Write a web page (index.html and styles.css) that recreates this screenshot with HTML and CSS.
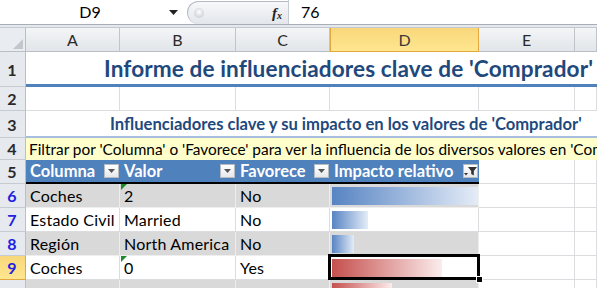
FILE: index.html
```html
<!DOCTYPE html>
<html lang="es">
<head>
<meta charset="utf-8">
<link rel="stylesheet" href="styles.css">
</head>
<body>
<div class="app">
  <div class="fbar">
    <div class="namebox">D9</div>
    <div class="nbdrop"><svg width="9" height="5" viewBox="0 0 9 5"><path d="M0 0h9L4.5 5z" fill="#222"/></svg></div>
    <div class="pill">
      <span class="knob"></span>
      <span class="fx">f<sub>x</sub></span>
    </div>
    <div class="fsep"></div>
    <div class="fval">76</div>
  </div>
  <div class="fgap"></div>
  <div class="sheet">
    <div class="row r-hdr">
      <div class="corner"><svg width="10" height="10" viewBox="0 0 10 10"><path d="M10 0V10H0z" fill="#c3c7cc"/></svg></div>
      <div class="ch">A</div>
      <div class="ch">B</div>
      <div class="ch">C</div>
      <div class="ch sel">D</div>
      <div class="ch">E</div>
      <div class="ch last"></div>
    </div>
    <div class="row r1">
      <div class="rh">1</div>
      <div class="title">Informe de influenciadores clave de 'Comprador'</div>
    </div>
    <div class="row r2">
      <div class="rh">2</div>
      <div class="c"></div><div class="c"></div><div class="c"></div><div class="c"></div><div class="c"></div><div class="c"></div>
    </div>
    <div class="row r3">
      <div class="rh">3</div>
      <div class="subtitle">Influenciadores clave y su impacto en los valores de 'Comprador'</div>
    </div>
    <div class="row r4">
      <div class="rh">4</div>
      <div class="note">Filtrar por 'Columna' o 'Favorece' para ver la influencia de los diversos valores en 'Comprador'</div>
    </div>
    <div class="row r5">
      <div class="rh">5</div>
      <div class="th">Columna<span class="dd"><svg width="7" height="4" viewBox="0 0 7 4"><path d="M0 0h7L3.5 4z" fill="#555"/></svg></span></div>
      <div class="th">Valor<span class="dd"><svg width="7" height="4" viewBox="0 0 7 4"><path d="M0 0h7L3.5 4z" fill="#555"/></svg></span></div>
      <div class="th">Favorece<span class="dd"><svg width="7" height="4" viewBox="0 0 7 4"><path d="M0 0h7L3.5 4z" fill="#555"/></svg></span></div>
      <div class="th">Impacto relativo<span class="dd"><svg width="13" height="10" viewBox="0 0 13 10"><path d="M4 1h9L9.8 5v4.5L7.2 8V5z" fill="#333"/><path d="M0 7h4L2 9.5z" fill="#333"/></svg></span></div>
      <div class="c"></div><div class="c"></div>
    </div>
    <div class="row dr alt">
      <div class="rh blue">6</div>
      <div class="c">Coches</div>
      <div class="c"><span class="tri"></span>2</div>
      <div class="c">No</div>
      <div class="c bar"><span class="b blueb" style="width:146px"></span></div>
      <div class="c white"></div><div class="c white"></div>
    </div>
    <div class="row dr">
      <div class="rh blue">7</div>
      <div class="c">Estado Civil</div>
      <div class="c">Married</div>
      <div class="c">No</div>
      <div class="c bar"><span class="b blueb" style="width:36px"></span></div>
      <div class="c"></div><div class="c"></div>
    </div>
    <div class="row dr alt">
      <div class="rh blue">8</div>
      <div class="c">Región</div>
      <div class="c">North America</div>
      <div class="c">No</div>
      <div class="c bar"><span class="b blueb" style="width:22px"></span></div>
      <div class="c white"></div><div class="c white"></div>
    </div>
    <div class="row dr">
      <div class="rh blue hl">9</div>
      <div class="c">Coches</div>
      <div class="c"><span class="tri"></span>0</div>
      <div class="c">Yes</div>
      <div class="c bar active"><span class="b redb" style="width:110px"></span><span class="selbox"></span><span class="handle"></span></div>
      <div class="c"></div><div class="c"></div>
    </div>
    <div class="row dr alt">
      <div class="rh blue"></div>
      <div class="c"></div>
      <div class="c"></div>
      <div class="c"></div>
      <div class="c bar"><span class="b redb" style="width:60px"></span></div>
      <div class="c white"></div><div class="c white"></div>
    </div>
  </div>
</div>
</body>
</html>
```

FILE: styles.css
```css
* { box-sizing: border-box; }
html, body { margin: 0; padding: 0; }
body {
  width: 597px;
  height: 288px;
  overflow: hidden;
  background: #fff;
  font-family: Lato, "Open Sans", sans-serif;
  color: #000;
}
.app { width: 597px; height: 288px; overflow: hidden; }

/* formula bar */
.fbar {
  height: 25px;
  display: flex;
  align-items: stretch;
  background: #fff;
  border-bottom: 1px solid #a7aeb8;
}
.namebox {
  width: 165px;
  display: flex;
  align-items: center;
  justify-content: center;
  padding-left: 15px;
  font-size: 16px;
  padding-bottom: 1px;
}
.nbdrop {
  width: 22px;
  display: flex;
  align-items: center;
  justify-content: center;
  padding-right: 6px;
}
.pill {
  width: 101px;
  margin-top: 1px;
  border: 1px solid #b3bac4;
  border-right: none;
  border-bottom: none;
  background: linear-gradient(#f7f8fa, #e3e6ea);
  display: flex;
  align-items: center;
  justify-content: space-between;
  padding: 0 6px 0 6px;
  border-top-left-radius: 12px;
  border-bottom-left-radius: 12px;
}
.knob {
  width: 10px; height: 10px;
  border-radius: 50%;
  background: radial-gradient(circle at 50% 40%, #fff 0, #d6d9de 60%, #c4c8ce 100%);
}
.fx {
  font-family: "Liberation Serif", serif;
  font-style: italic;
  font-weight: bold;
  font-size: 15px;
  color: #222;
}
.fx sub { font-size: 10px; vertical-align: -1px; }
.fsep {
  width: 10px;
  border-left: 1px solid #c6ccd3;
}
.fval {
  display: flex;
  align-items: center;
  font-size: 16px;
  padding-left: 3px;
  padding-bottom: 1px;
}
.fgap {
  height: 3px;
  background: #e5e8ec;
  border-bottom: 1px solid #c3c8cf;
}

/* sheet */
.row {
  display: grid;
  grid-template-columns: 26px 94px 116px 94px 149px 96px 22px;
}
.r-hdr { height: 24px; }
.corner {
  background: #e9ecf0;
  border-right: 1px solid #b9bfc7;
  border-bottom: 1px solid #b9bfc7;
  display: flex; align-items: flex-end; justify-content: flex-end;
  padding: 0 2px 2px 0;
}
.ch {
  background: linear-gradient(#f3f5f7, #e2e5e9);
  border-right: 1px solid #c0c5cc;
  border-bottom: 1px solid #b9bfc7;
  display: flex; align-items: center; justify-content: center;
  font-size: 16px;
  color: #2a2a2a;
}
.ch.sel {
  background: linear-gradient(#f8d77b, #ffe68f);
  border: 1px solid #e3a93f;
  border-top: none;
  color: #3a3a3a;
}
.rh {
  background: #e6e9ed;
  border-right: 1px solid #b9bfc7;
  border-bottom: 1px solid #c6cbd2;
  display: flex; align-items: center; justify-content: center;
  font-size: 16px;
  color: #2a2a2a;
  font-weight: bold;
  padding-right: 1px;
}
.rh.blue { color: #2121e0; }
.rh.hl { background: linear-gradient(#f8d77b, #ffe68f); border-right-color: #e3a93f; border-bottom-color: #e3a93f; }

.c {
  border-right: 1px solid #dadcdf;
  border-bottom: 1px solid #dadcdf;
  display: flex; align-items: center;
  padding-left: 4px;
  font-size: 16px;
  letter-spacing: 0.2px;
  white-space: nowrap;
  overflow: hidden;
  position: relative;
}

.r1 { height: 35px; }
.title {
  grid-column: 2 / -1;
  border-bottom: 3px solid #4f81bd;
  color: #1f497d;
  font-weight: bold;
  font-size: 22.6px;
  white-space: nowrap;
  overflow: hidden;
  padding-left: 78px;
  display: flex; align-items: center;
  letter-spacing: 0.1px;
}
.r2 { height: 24px; }
.r3 { height: 27px; }
.subtitle {
  grid-column: 2 / -1;
  border-bottom: 2px solid #a7bfde;
  color: #1f497d;
  font-weight: bold;
  font-size: 16.6px;
  white-space: nowrap;
  overflow: hidden;
  padding-left: 84px;
  display: flex; align-items: center;
  padding-top: 1px;
}
.r4 { height: 22px; }
.note {
  grid-column: 2 / -1;
  background: #ffffcc;
  font-size: 15.4px;
  white-space: nowrap;
  overflow: hidden;
  padding-left: 3px;
  display: flex; align-items: center;
}
.r5 { height: 24px; }
.th {
  background: #4f81bd;
  color: #fff;
  font-weight: bold;
  font-size: 16.5px;
  border-bottom: 2px solid #000;
  display: flex; align-items: center;
  padding-left: 4px;
  position: relative;
  white-space: nowrap;
}
.dd {
  position: absolute;
  right: 1px;
  top: 4px;
  width: 15px;
  height: 14px;
  background: linear-gradient(#ffffff, #e6e8eb);
  border: 1px solid #b6bcc4;
  display: flex; align-items: center; justify-content: center;
}
.th:last-of-type .dd { width: 19px; height: 16px; top: 3px; }

.dr { height: 24px; }
.dr .c { background: #fff; }
.dr.alt .c { background: #d9d9d9; border-color: #eeeeee; }
.dr.alt .c.white { background: #fff; border-color: #dadcdf; }
.dr .c.bar { padding-left: 2px; }
.b {
  display: block;
  height: 18px;
}
.blueb { background: linear-gradient(to right, #5784c3, #e4ecf7); }
.redb { background: linear-gradient(to right, #c5504e, #fbecec); }
.tri {
  position: absolute;
  left: 1px; top: 0;
  width: 0; height: 0;
  border-top: 6px solid #1e8a2e;
  border-right: 6px solid transparent;
}
.selbox {
  position: absolute;
  left: -2px; top: -2px; right: -2px; bottom: -1px;
  border: 3px solid #000;
}
.c.active { overflow: visible; z-index: 2; }
.handle {
  position: absolute;
  right: -5px; bottom: -4px;
  width: 7px; height: 7px;
  background: #000;
  border: 1px solid #fff;
}
```
